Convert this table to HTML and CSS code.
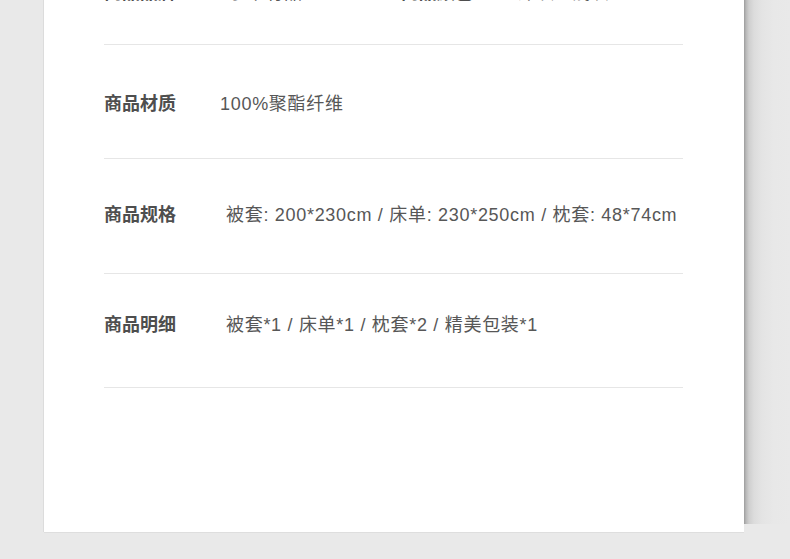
FILE: index.html
```html
<!DOCTYPE html>
<html lang="zh">
<head>
<meta charset="utf-8">
<link rel="stylesheet" href="styles.css">
</head>
<body>
<div class="page">
  <div class="card">
    <div class="row row-top">
      <span class="label">商品品牌</span>
      <span class="value v-top1">小米有品</span>
      <span class="label l-top2">商品颜色</span>
      <span class="value v-top2">深灰 / 浅灰</span>
    </div>
    <div class="row row-2">
      <span class="label">商品材质</span>
      <span class="value v-near">100%聚酯纤维</span>
    </div>
    <div class="row row-3">
      <span class="label">商品规格</span>
      <span class="value">被套: 200*230cm / 床单: 230*250cm / 枕套: 48*74cm</span>
    </div>
    <div class="row row-4">
      <span class="label">商品明细</span>
      <span class="value">被套*1 / 床单*1 / 枕套*2 / 精美包装*1</span>
    </div>
  </div>
  <div class="shade"></div>
</div>
</body>
</html>
```
FILE: styles.css
```css
html, body {
  margin: 0;
  padding: 0;
  background: #e9e9e9;
  height: 559px;
  overflow: hidden;
}
.page {
  display: flex;
  align-items: flex-start;
  padding-left: 44px;
}
.card {
  width: 640px;
  height: 532px;
  background: #fff;
  padding-left: 60px;
  box-shadow: -1px 0 0 #dcdcdc, 0 1px 0 #dedede;
}
.shade {
  width: 46px;
  height: 524px;
  background: linear-gradient(to right, #9c9c9c 0px, #b8b8b8 2px, #cfcfcf 5px, #dcdcdc 10px, #e4e4e4 18px, #e8e8e8 30px, #e9e9e9 46px);
}
.row {
  width: 579px;
  display: flex;
  align-items: flex-start;
  border-bottom: 1px solid #e6e6e6;
  box-sizing: border-box;
  font-family: "Liberation Sans", "Noto Sans CJK SC", sans-serif;
  font-size: 18px;
  line-height: 24px;
}
.label {
  width: 72px;
  flex: none;
  font-weight: bold;
  color: #4e4e4e;
  white-space: nowrap;
}
.value {
  color: #575757;
  margin-left: 50px;
  letter-spacing: 0.7px;
  white-space: nowrap;
}
.v-near { margin-left: 44px; }
.row-top {
  height: 45px;
}
.row-top .label, .row-top .value {
  margin-top: -19px;
}
.row-top .v-top1 { margin-left: 52px; }
.row-top .l-top2 { margin-left: 98px; }
.row-top .v-top2 { margin-left: 45px; }
.row-2 {
  height: 114px;
  padding-top: 47px;
}
.row-3 {
  height: 115px;
  padding-top: 44px;
}
.row-4 {
  height: 114px;
  padding-top: 39px;
}
```
